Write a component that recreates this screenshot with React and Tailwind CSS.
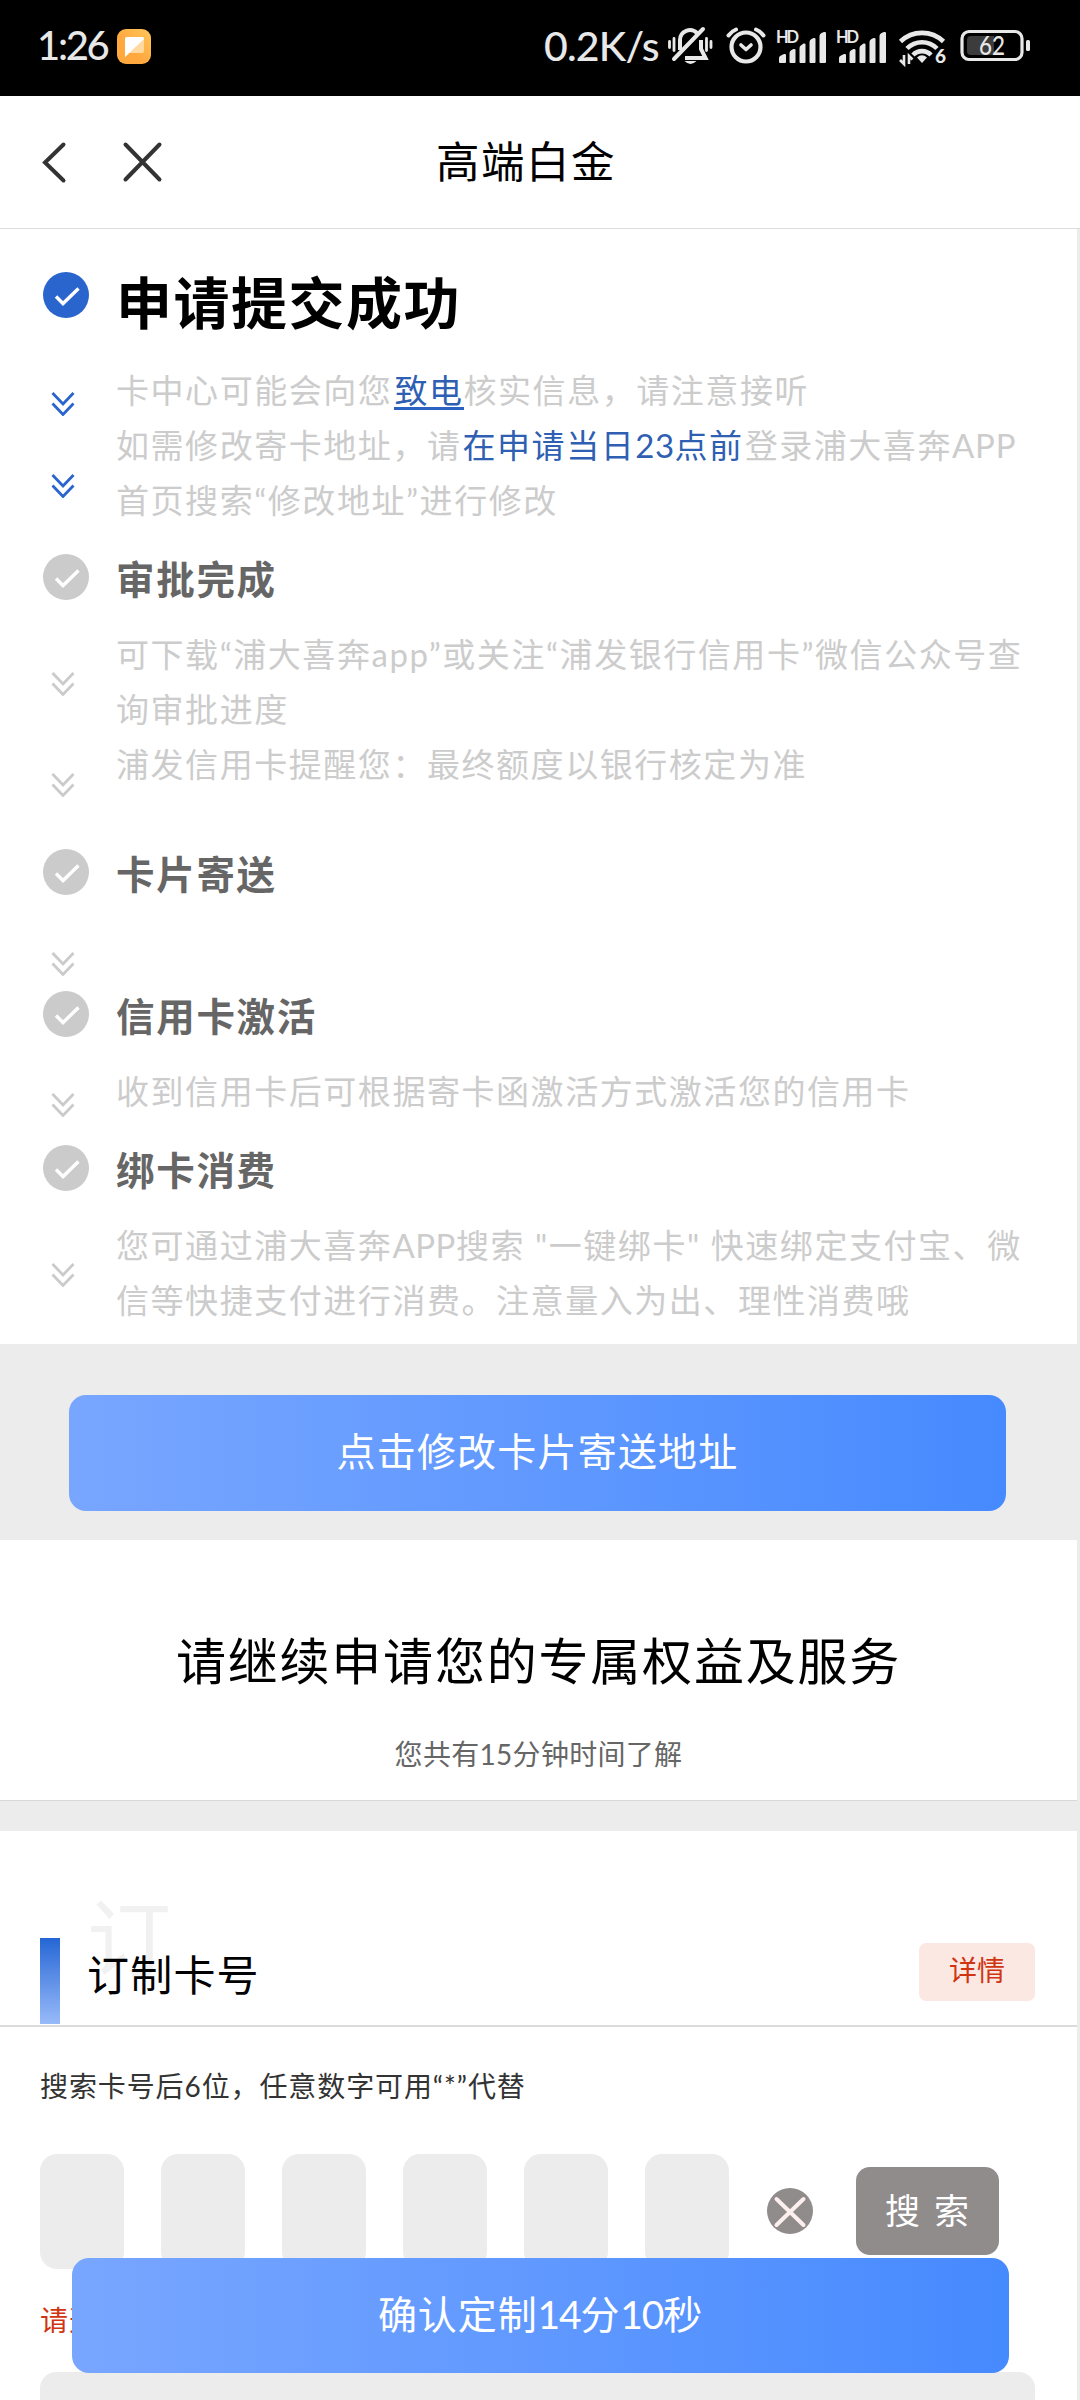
import React from "react";

const steps = [
  {
    title: "申请提交成功",
    active: true,
    height: "h-[282px]",
    arrows: ["mt-[74px]", "mt-[58px]"],
    body: (
      <>
        <p>
          卡中心可能会向您
          <a className="ml-[2px] text-[#2f5fb3] border-b-3 border-[#2a62c4] inline-block leading-[33px]">
            致电
          </a>
          核实信息，请注意接听
        </p>
        <p>
          如需修改寄卡地址，请
          <span className="mx-[1px] text-[#2f5fb3]">
            在申请当日<span className="tracking-[0.500px]">23</span>点前
          </span>
          登录浦大喜奔<span className="tracking-[0.800px]">APP</span>
        </p>
        <p>首页搜索“修改地址”进行修改</p>
      </>
    ),
  },
  {
    title: "审批完成",
    height: "h-[295px]",
    arrows: ["mt-[72px]", "mt-[77px]"],
    body: (
      <>
        <p>可下载“浦大喜奔app”或关注“浦发银行信用卡”微信公众号查</p>
        <p>询审批进度</p>
        <p>浦发信用卡提醒您：最终额度以银行核定为准</p>
      </>
    ),
  },
  {
    title: "卡片寄送",
    height: "h-[142px]",
    arrows: ["mt-[57px]"],
    body: null,
  },
  {
    title: "信用卡激活",
    height: "h-[154px]",
    arrows: ["mt-[56px]"],
    body: <p>收到信用卡后可根据寄卡函激活方式激活您的信用卡</p>,
  },
  {
    title: "绑卡消费",
    height: "h-[199px]",
    arrows: ["mt-[72px]"],
    body: (
      <>
        <p>
          您可通过浦大喜奔<span className="tracking-[0.500px]">APP</span>搜索 "一键绑卡" 快速绑定支付宝、微
        </p>
        <p>信等快捷支付进行消费。注意量入为出、理性消费哦</p>
      </>
    ),
  },
];

function Signal() {
  return (
    <svg className="overflow-visible" width="52" height="36" viewBox="0 0 52 36" fill="#e8e8e8">
      <text x="0" y="13.500" fontSize="16.5" fontWeight="700" fontFamily="Lato, sans-serif" textLength="23">
        HD
      </text>
      <path d="M3 33v-4q0-2 2-2.500l3-1.500q2-.5 2 1v7q0 1-1 1H4q-1 0-1-1zM13.500 24q0-2 2-3l2-1q2-.5 2 1v12q0 1-1 1h-4q-1 0-1-1zM23.500 19q0-2 2-3l2-1.500q2-.5 2 1V33q0 1-1 1h-4q-1 0-1-1zM33.500 13q0-2 2-3l2-1q2-.5 2 1v23q0 1-1 1h-4q-1 0-1-1zM43.500 7q0-2 2-3l2.500-1q2-.5 2 1v29q0 1-1 1h-4.500q-1 0-1-1z" />
    </svg>
  );
}

function StatusBar() {
  return (
    <div className="flex h-24 items-start bg-black pt-[26px] pl-[37px] text-[#e8e8e8]">
      <span className="w-[80px] text-[40px] leading-[39px] font-medium tracking-[-2.300px] whitespace-nowrap">1:26</span>
      <svg className="mt-[3px]" width="34" height="35" viewBox="0 0 34 35">
        <defs>
          <linearGradient id="note" x1="0" y1="1" x2="1" y2="0">
            <stop offset="0.4" stopColor="#ffa83e" />
            <stop offset="1" stopColor="#ffc65a" />
          </linearGradient>
        </defs>
        <rect width="34" height="35" rx="9" fill="url(#note)" />
        <path d="M10 8h15q2 0 2 2v12q0 2-2 2H12l-4 4V10q0-2 2-2z" fill="#ffd9a0" />
        <path d="M10 8h15q2 0 2 2L8 28V10q0-2 2-2z" fill="#fff" />
      </svg>
      <div className="ml-[393px] flex items-start">
        <span className="w-[124px] text-[41px] leading-[39px] font-medium tracking-[-0.800px] whitespace-nowrap">0.2K/s</span>
        {/* muted bell */}
        <svg width="45" height="40" viewBox="0 0 45 40" fill="none" stroke="#e8e8e8" strokeLinecap="round">
          <path d="M1.500 15.500v6M6 12.500v12M38.500 12.500v12M43 15.500v6" strokeWidth="2.800" />
          <path d="M12 24V14a10 10 0 0 1 17-7M33 14v9l4.500 9H17" strokeWidth="4" strokeLinecap="butt" />
          <path d="M35 3L6 33" strokeWidth="4" />
          <path d="M16.500 35h12q-6 6-12 0z" fill="#e8e8e8" stroke="none" />
        </svg>
        <svg className="ml-[13px]" width="40" height="40" viewBox="0 0 40 40" fill="none" stroke="#e8e8e8" strokeWidth="4.200" strokeLinecap="round" strokeLinejoin="round">
          <circle cx="20" cy="21" r="14.500" />
          <path d="M15 19l5 4.500 5-4.500" strokeWidth="3.600" />
          <path d="M2.500 9.500Q6 5 10 3.500M37.500 9.500Q34 5 30 3.500" strokeWidth="4" />
        </svg>
        <div className="ml-[10px] mt-[3px] flex gap-2">
          <Signal />
          <Signal />
        </div>
        <svg className="ml-[11px] overflow-visible" width="48" height="40" viewBox="0 0 48 40" fill="none" stroke="#e8e8e8" strokeWidth="4.600">
          <path d="M1.500 15.500a31 31 0 0 1 43 0M8 22.500a21 21 0 0 1 30 0M14 29a12.500 12.500 0 0 1 18 0" />
          <path d="M18 31.500q5-4.500 10 0l-5 5.500z" fill="#e8e8e8" stroke="none" />
          <path d="M5 29v9l-4-4M10 38v-8l3.500 3.500" strokeWidth="2.600" />
          <text x="36" y="37" fontSize="19" fontWeight="900" fill="#e8e8e8" stroke="none" fontFamily="Lato, sans-serif">
            6
          </text>
        </svg>
        <svg className="ml-[13px] mt-[2px]" width="72" height="34" viewBox="0 0 72 34">
          <rect x="2" y="3.500" width="60" height="28" rx="7" fill="none" stroke="#e8e8e8" strokeWidth="3.200" />
          <path d="M11 8h23v19H11q-4 0-4-4V12q0-4 4-4z" fill="#3c3c3c" />
          <rect x="66" y="12" width="4" height="11" rx="1.500" fill="#e8e8e8" />
          <text x="19" y="27" fontSize="26" fontWeight="500" fill="#e8e8e8" fontFamily="Lato, sans-serif" textLength="26" lengthAdjust="spacingAndGlyphs">
            62
          </text>
        </svg>
      </div>
    </div>
  );
}

function Header() {
  return (
    <header className="grid h-[133px] grid-cols-3 items-center border-b border-[#dcdcdc] bg-white">
      <div className="flex items-center pl-[42px]">
        <svg width="26" height="44" viewBox="0 0 26 44" fill="none" stroke="#333" strokeWidth="4" strokeLinecap="round">
          <path d="M21.500 4.500L3 22.500l18.500 18" />
        </svg>
        <svg className="ml-[54px]" width="42" height="42" viewBox="0 0 42 42" fill="none" stroke="#333" strokeWidth="4" strokeLinecap="round">
          <path d="M3.500 3.500l34 35M37.500 3.500l-34 35" />
        </svg>
      </div>
      <h1 className="-translate-x-[14px] text-center text-[43.500px] tracking-[1.500px] text-black">高端白金</h1>
    </header>
  );
}

function Step({ title, active, height, arrows, body }) {
  return (
    <section className={`flex ${height}`}>
      <div className={`flex w-[116px] shrink-0 flex-col items-start pl-[43px] ${active ? "text-[#2a64cd]" : "text-[#cbcbcb]"}`}>
        <svg className="shrink-0" width="46" height="46" viewBox="0 0 46 46">
          <circle cx="23" cy="23" r="23" fill="currentColor" />
          <path d="M13 24.500l7 7 15.500-15" fill="none" stroke="#fff" strokeWidth="3.400" />
        </svg>
        {arrows.map((gap, i) => (
          <svg key={i} className={`ml-[8px] shrink-0 ${gap}`} width="24" height="24" viewBox="0 0 24 24" fill="none" stroke="currentColor" strokeWidth="2.800">
            <path d="M1.500 1l10.500 11L22.500 1M1.500 11.500l10.500 11 10.500-11" />
          </svg>
        ))}
      </div>
      <div className="whitespace-nowrap">
        <h2
          className={
            active
              ? "pt-px text-[56px] leading-[60px] font-bold tracking-[1.500px] text-black"
              : "text-[38.500px] leading-[51px] font-bold tracking-[1.700px] text-[#666]"
          }
        >
          {title}
        </h2>
        <div className={`text-[33px] leading-[55px] tracking-[1.550px] text-[#cccccc] ${active ? "mt-[30px]" : "mt-[22px]"}`}>
          {body}
        </div>
      </div>
    </section>
  );
}

function App() {
  return (
    <div className="h-[2400px] w-[1080px] overflow-hidden bg-white font-[Lato,'Noto_Sans_CJK_SC',sans-serif]">
      <StatusBar />
      <Header />

      <main className="relative h-[2171px] overflow-hidden border-r-3 border-[#ececec]">
        <div className="pt-[43px]">
          {steps.map((step) => (
            <Step key={step.title} {...step} />
          ))}
        </div>

        <div className="h-[196px] bg-[#ececec] px-[69px] pt-[51px]">
          <button className="h-[116px] w-[937px] rounded-[17px] bg-linear-to-r from-[#78a6ff] to-[#468aff] pb-1 text-[39px] tracking-[1.200px] text-white">
            点击修改卡片寄送地址
          </button>
        </div>

        <div className="h-[261px] border-b border-[#d8d8d8] pt-[86px] text-center">
          <h2 className="text-[50px] leading-[70px] tracking-[1.800px] text-black">请继续申请您的专属权益及服务</h2>
          <p className="mt-[38px] text-[28px] leading-[40px] tracking-[0.300px] text-[#666]">您共有15分钟时间了解</p>
        </div>
        <div className="h-[30px] bg-[#ececec]" />

        <div className="flex h-[196px] items-end border-b-2 border-[#dadcdb] pr-[42px] pl-[40px]">
          <div className="mb-px h-[86px] w-[20px] bg-linear-to-b from-[#2466d4] to-[#98baf9]" />
          <div className="relative ml-[27px] flex-1">
            <span className="absolute -top-[49px] left-0 text-[84px] leading-[84px] text-[#f1f1f1]">订</span>
            <h3 className="relative mb-[20px] text-[42px] leading-[60px] tracking-[1.200px] text-black">订制卡号</h3>
          </div>
          <button className="mb-[24px] h-[58px] w-[116px] rounded-[7px] bg-[#fce8e3] pb-1 text-[28px] text-[#cf3510]">
            详情
          </button>
        </div>

        <div className="px-[40px] pt-[39px]">
          <p className="text-[28px] leading-[40px] tracking-[0.900px] text-[#333]">搜索卡号后6位，任意数字可用“*”代替</p>
          <div className="mt-[48px] flex items-start">
            <div className="flex gap-[37px]">
              {[0, 1, 2, 3, 4, 5].map((n) => (
                <div key={n} className="h-[115px] w-[84px] rounded-[17px] bg-[#ececec]" />
              ))}
            </div>
            <svg className="mt-[34px] ml-[38px]" width="46" height="46" viewBox="0 0 46 46">
              <circle cx="23" cy="23" r="23" fill="#918c8c" />
              <path d="M9.500 11l27 26M36.500 11l-27 26" stroke="#fdefee" strokeWidth="4" strokeLinecap="round" />
            </svg>
            <button className="mt-[13px] ml-[43px] h-[88px] w-[143px] rounded-[14px] bg-[#918c8c] pb-px text-[35px] tracking-[1px] text-white [word-spacing:3px]">
              搜 索
            </button>
          </div>
          <p className="mt-[31px] text-[28px] leading-[40px] tracking-[0.900px] text-[#cf3510]">请选择</p>
          <div className="mt-[32px] h-[60px] w-[995px] rounded-[16px] bg-[#ececec]" />
        </div>

        {/* fixed bottom button */}
        <button className="absolute bottom-[27px] left-[72px] h-[115px] w-[937px] rounded-[17px] bg-linear-to-r from-[#78a6ff] to-[#468aff] pb-[3px] text-[39px] tracking-[0.900px] text-white">
          确认定制<span className="tracking-[-1.200px]">14</span>分<span className="tracking-[-1.200px]">10</span>秒
        </button>
      </main>
    </div>
  );
}

export default App;
